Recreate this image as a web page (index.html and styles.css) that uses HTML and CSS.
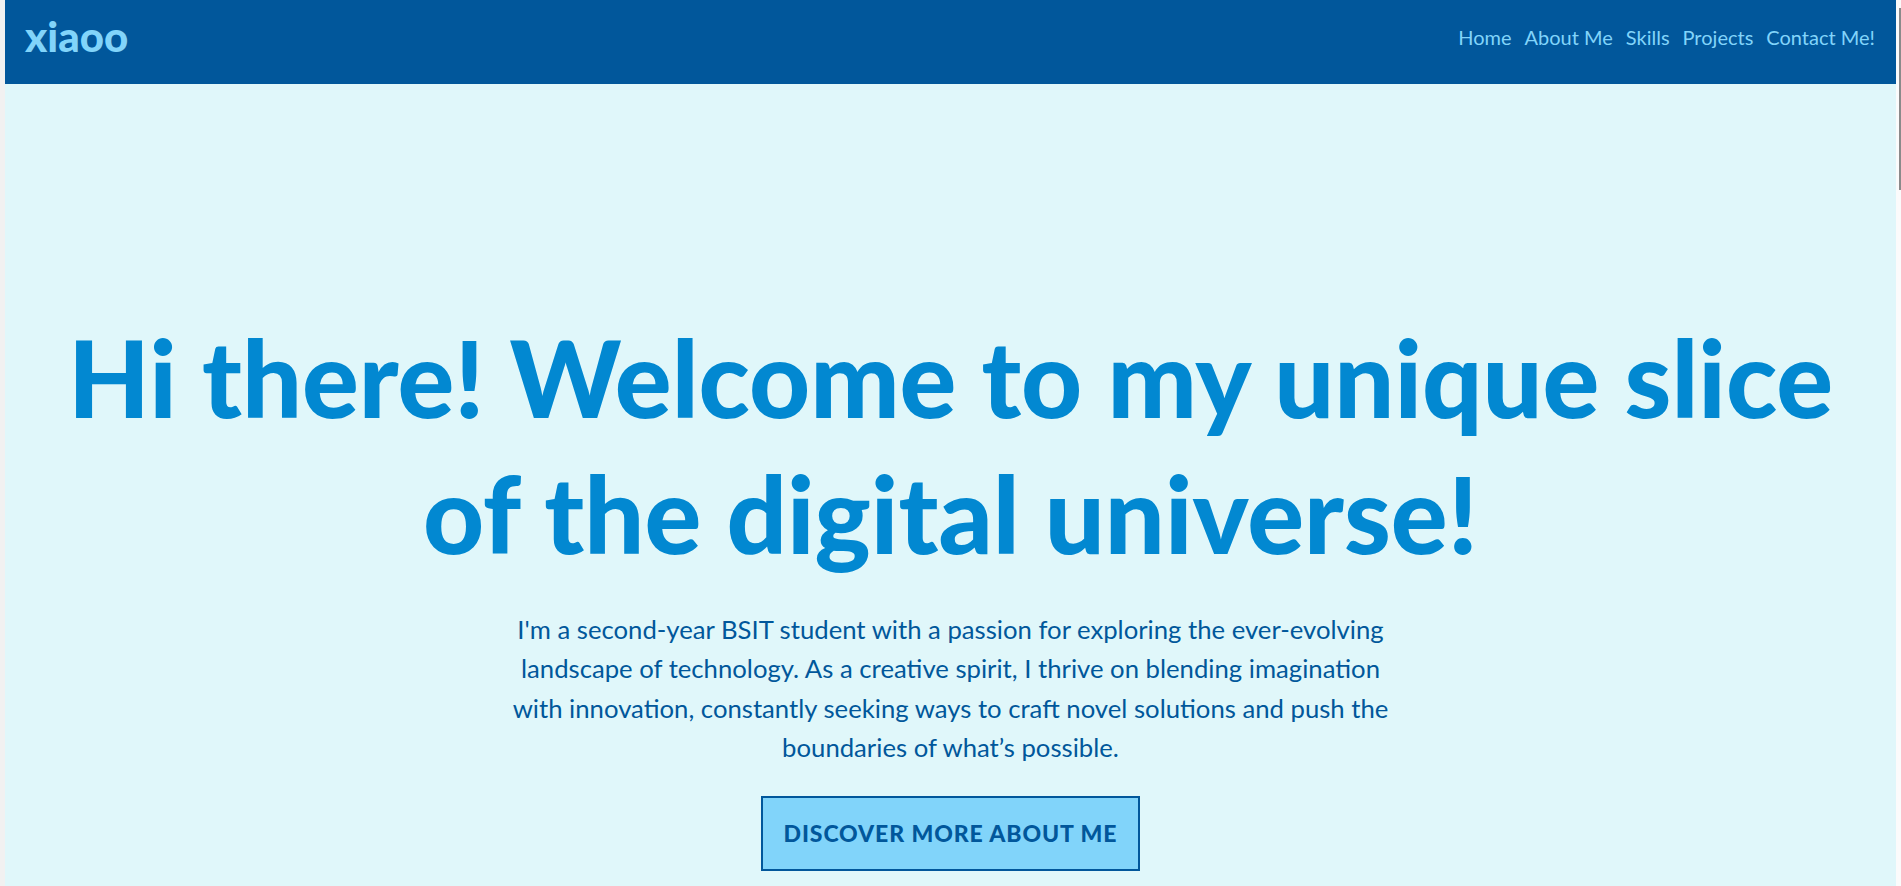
FILE: index.html
```html
<!DOCTYPE html>
<html lang="en">
<head>
<meta charset="utf-8">
<title>xiaoo</title>
<link rel="stylesheet" href="styles.css">
</head>
<body>
<div class="frame">
  <div class="gutter-left"></div>
  <div class="page">
    <header class="topbar">
      <a class="logo" href="#">xiaoo</a>
      <nav class="nav">
        <a href="#">Home</a>
        <a href="#">About Me</a>
        <a href="#">Skills</a>
        <a href="#">Projects</a>
        <a href="#">Contact Me!</a>
      </nav>
    </header>
    <section class="hero">
      <h1 class="hero-title">Hi there! Welcome to my unique slice of the digital universe!</h1>
      <p class="hero-text">I'm a second-year BSIT student with a passion for exploring the ever-evolving landscape of technology. As a creative spirit, I thrive on blending imagination with innovation, constantly seeking ways to craft novel solutions and push the boundaries of what’s possible.</p>
      <a class="hero-btn" href="#">Discover more about me</a>
    </section>
  </div>
  <div class="gutter-right"><div class="thumb"></div></div>
</div>
</body>
</html>
```
FILE: styles.css
```css
* { box-sizing: border-box; }
html, body { margin: 0; padding: 0; height: 100%; overflow: hidden; }
body {
  font-family: Lato, "Noto Sans", sans-serif;
  background: #f2f2f2;
}
.frame {
  display: flex;
  height: 886px;
}
.gutter-left {
  width: 5px;
  background: #f1f1f1;
  flex: none;
}
.gutter-right {
  width: 5px;
  background: #fbfbfb;
  flex: none;
  display: flex;
  justify-content: flex-end;
  padding-top: 8px;
}
.thumb {
  width: 2px;
  height: 182px;
  background: #8a8a8a;
}
.page {
  flex: 1;
  background: #e0f7fa;
  display: flex;
  flex-direction: column;
}
.topbar {
  height: 84px;
  background: #01579b;
  display: flex;
  align-items: center;
  justify-content: space-between;
  padding: 0 20px 11px 20px;
}
.logo {
  color: #81d4fa;
  font-weight: 900;
  font-size: 42px;
  line-height: 50px;
  text-decoration: none;
  margin-top: -2px;
}
.nav {
  display: flex;
  gap: 13px;
  margin-right: 1px;
}
.nav a {
  color: #81d4fa;
  font-size: 20px;
  line-height: 26px;
  text-decoration: none;
}
.hero {
  padding: 225px 40px 0;
  text-align: center;
  display: flex;
  flex-direction: column;
  align-items: center;
}
.hero-title {
  margin: 0;
  font-size: 106px;
  line-height: 136px;
  font-weight: 900;
  color: #0288d1;
}
.hero-text {
  margin: 29px 0 0;
  max-width: 895px;
  font-size: 25.7px;
  line-height: 39.3px;
  color: #01579b;
}
.hero-btn {
  margin-top: 29px;
  display: inline-block;
  padding: 20px 21px;
  border: 2px solid #01579b;
  background: #81d4fa;
  color: #01579b;
  font-weight: 900;
  font-size: 23px;
  line-height: 31px;
  letter-spacing: 0.9px;
  text-transform: uppercase;
  text-decoration: none;
}
```
